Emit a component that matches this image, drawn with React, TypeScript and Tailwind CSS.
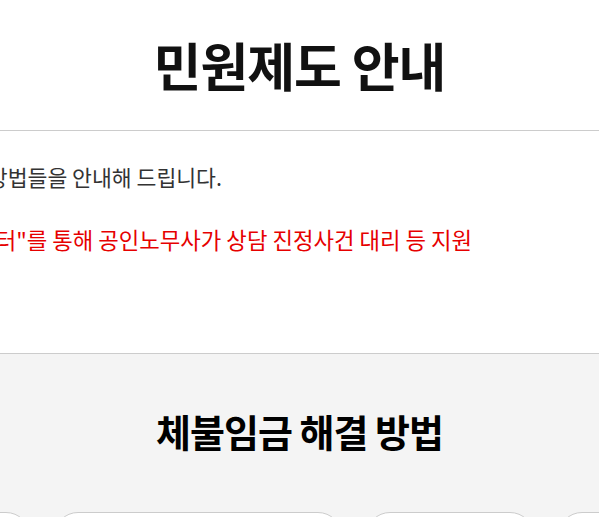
import React from "react";

export default function App() {
  return (
    <div className="w-full h-[517px] overflow-hidden bg-white" style={{ fontFamily: '"Noto Sans CJK KR", "Noto Sans", sans-serif' }}>
      <header className="h-[131px] flex items-center justify-center border-b border-[#cccccc]">
        <h1 className="text-[52px] leading-none font-bold text-[#111111] tracking-[-1px]">민원제도 안내</h1>
      </header>
      <div className="h-[222px] pt-[31px]">
        <div className="w-[222px] flex justify-end whitespace-nowrap">
          <p className="text-[21.6px] leading-[30px] text-[#333333]">
            체불임금 등 노동관련 민원을 해결할 수 있는 여러 방법들을 안내해 드립니다.
          </p>
        </div>
        <div className="w-[472px] flex justify-end whitespace-nowrap mt-[32px]">
          <p className="text-[22.3px] leading-[30px] text-[#e60000]">
            ※ 월평균 임금 300만원 미만 근로자는 "노동권익센터"를 통해 공인노무사가 상담 진정사건 대리 등 지원
          </p>
        </div>
      </div>
      <section className="border-t border-[#cccccc] bg-[#f4f4f4] pt-[58px]">
        <h2 className="text-center text-[38px] leading-none font-bold text-black tracking-[-1px]">체불임금 해결 방법</h2>
        <div className="flex gap-[24px] mt-[62px] ml-[-170px] whitespace-nowrap">
          <div className="shrink-0 w-[200px] h-[200px] rounded-[24px] border border-[#cccccc] bg-white" />
          <div className="shrink-0 w-[288px] h-[200px] rounded-[24px] border border-[#cccccc] bg-white" />
          <div className="shrink-0 w-[168px] h-[200px] rounded-[24px] border border-[#cccccc] bg-white" />
          <div className="shrink-0 w-[200px] h-[200px] rounded-[24px] border border-[#cccccc] bg-white" />
        </div>
      </section>
    </div>
  );
}
